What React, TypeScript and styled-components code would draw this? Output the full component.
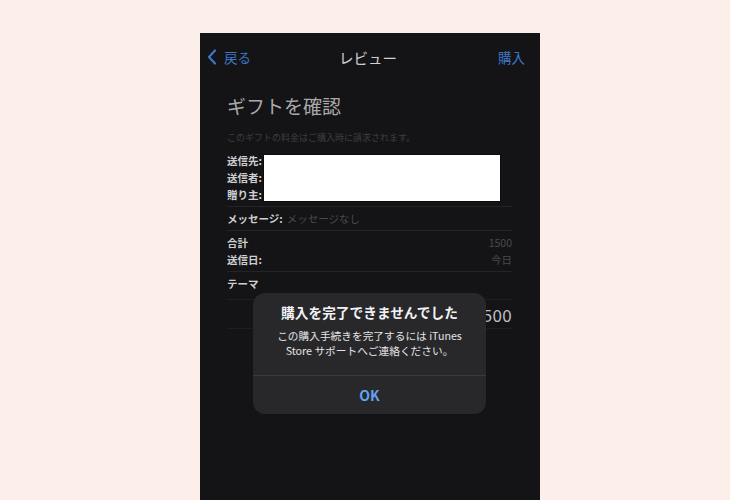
import styled, { createGlobalStyle } from 'styled-components';

const GlobalStyle = createGlobalStyle`
  html, body {
    margin: 0;
    padding: 0;
    background: #fcefe9;
    font-family: 'Noto Sans CJK JP', 'Noto Sans', sans-serif;
  }
`;

const Page = styled.div`
  width: 730px;
  height: 500px;
  padding: 33px 0 0 200px;
  box-sizing: border-box;
  overflow: hidden;
`;

const Phone = styled.div`
  position: relative;
  width: 340px;
  height: 520px;
  background: #141416;
  display: flex;
  flex-direction: column;
`;

const NavBar = styled.div`
  height: 48px;
  display: grid;
  grid-template-columns: 1fr auto 1fr;
  align-items: center;
  padding: 0 15px 0 7px;
`;

const NavButton = styled.div<{ align?: 'left' | 'right' }>`
  display: flex;
  align-items: center;
  gap: 7px;
  justify-content: ${({ align }) => (align === 'right' ? 'flex-end' : 'flex-start')};
  color: #3b77c6;
  font-size: 13.5px;
`;

const NavTitle = styled.div`
  color: #cfcfd1;
  font-size: 14.5px;
  padding-left: 4px;
`;

const Body = styled.div`
  padding: 0 28px 0 27px;
  display: flex;
  flex-direction: column;
`;

const Heading = styled.h1`
  margin: 12px 0 0;
  font-size: 19px;
  font-weight: 400;
  color: #a9a9ab;
  line-height: 26px;
`;

const Note = styled.p`
  margin: 13px 0 0;
  font-size: 9px;
  color: #3e3e41;
  line-height: 12px;
`;

const Senders = styled.div`
  margin-top: 8px;
  display: flex;
  align-items: flex-start;
  padding-bottom: 3px;
  border-bottom: 1px solid #242427;
`;

const SenderLabels = styled.div`
  display: flex;
  flex-direction: column;
`;

const Label = styled.span`
  font-size: 10.5px;
  font-weight: 700;
  color: #cfcfd1;
  line-height: 17px;
`;

const Masked = styled.div`
  width: 236px;
  height: 46px;
  margin: 3px 0 0 2px;
  background: #ffffff;
  box-shadow: 0 0 0 1px #0c0c0d;
`;

const Row = styled.div<{ last?: boolean }>`
  display: flex;
  flex-direction: column;
  padding: 3px 0 3px;
  border-bottom: ${({ last }) => (last ? 'none' : '1px solid #242427')};
`;

const Line = styled.div`
  display: flex;
  align-items: center;
  justify-content: space-between;
  height: 17px;
`;

const Inline = styled.div`
  display: flex;
  align-items: center;
  gap: 4px;
`;

const Value = styled.span`
  font-size: 10.5px;
  color: #4a4a4d;
`;

const ThemeStrip = styled.div`
  margin-top: 4px;
  height: 28px;
  display: flex;
  align-items: center;
  justify-content: flex-end;
  border-top: 1px solid #1e1e21;
  border-bottom: 1px solid #1e1e21;
`;

const Amount = styled.span`
  font-size: 17px;
  color: #bfbfc1;
  letter-spacing: 0.3px;
`;

const Dialog = styled.div`
  position: absolute;
  top: 260px;
  left: 53px;
  width: 233px;
  border-radius: 12px;
  background: #28282b;
  display: flex;
  flex-direction: column;
  align-items: center;
  text-align: center;
  overflow: hidden;
`;

const DialogText = styled.div`
  height: 82px;
  box-sizing: border-box;
  padding-top: 10px;
  display: flex;
  flex-direction: column;
  gap: 6px;
`;

const DialogTitle = styled.div`
  font-size: 13.7px;
  font-weight: 700;
  color: #f2f2f4;
  line-height: 19px;
`;

const DialogMessage = styled.div`
  font-size: 10.7px;
  color: #e4e4e6;
  line-height: 15px;
`;

const DialogAction = styled.div`
  align-self: stretch;
  height: 38px;
  border-top: 1px solid #3a3a3d;
  display: flex;
  align-items: center;
  justify-content: center;
  color: #64a2ee;
  font-size: 14px;
  font-weight: 700;
`;

const Chevron = () => (
  <svg width="10" height="16" viewBox="0 0 10 16" fill="none">
    <path d="M8 1.5L2 8l6 6.5" stroke="#3b77c6" strokeWidth="2.2" strokeLinecap="round" strokeLinejoin="round" />
  </svg>
);

export default function App() {
  return (
    <>
      <GlobalStyle />
      <Page>
        <Phone>
          <NavBar>
            <NavButton>
              <Chevron />
              戻る
            </NavButton>
            <NavTitle>レビュー</NavTitle>
            <NavButton align="right">購入</NavButton>
          </NavBar>
          <Body>
            <Heading>ギフトを確認</Heading>
            <Note>このギフトの料金はご購入時に請求されます。</Note>
            <Senders>
              <SenderLabels>
                <Label>送信先:</Label>
                <Label>送信者:</Label>
                <Label>贈り主:</Label>
              </SenderLabels>
              <Masked />
            </Senders>
            <Row>
              <Line>
                <Inline>
                  <Label>メッセージ:</Label>
                  <Value>メッセージなし</Value>
                </Inline>
              </Line>
            </Row>
            <Row>
              <Line>
                <Label>合計</Label>
                <Value>1500</Value>
              </Line>
              <Line>
                <Label>送信日:</Label>
                <Value>今日</Value>
              </Line>
            </Row>
            <Row last>
              <Line>
                <Label>テーマ</Label>
              </Line>
            </Row>
            <ThemeStrip>
              <Amount>1500</Amount>
            </ThemeStrip>
          </Body>
          <Dialog>
            <DialogText>
              <DialogTitle>購入を完了できませんでした</DialogTitle>
              <DialogMessage>
                この購入手続きを完了するには iTunes
                <br />
                Store サポートへご連絡ください。
              </DialogMessage>
            </DialogText>
            <DialogAction>OK</DialogAction>
          </Dialog>
        </Phone>
      </Page>
    </>
  );
}
